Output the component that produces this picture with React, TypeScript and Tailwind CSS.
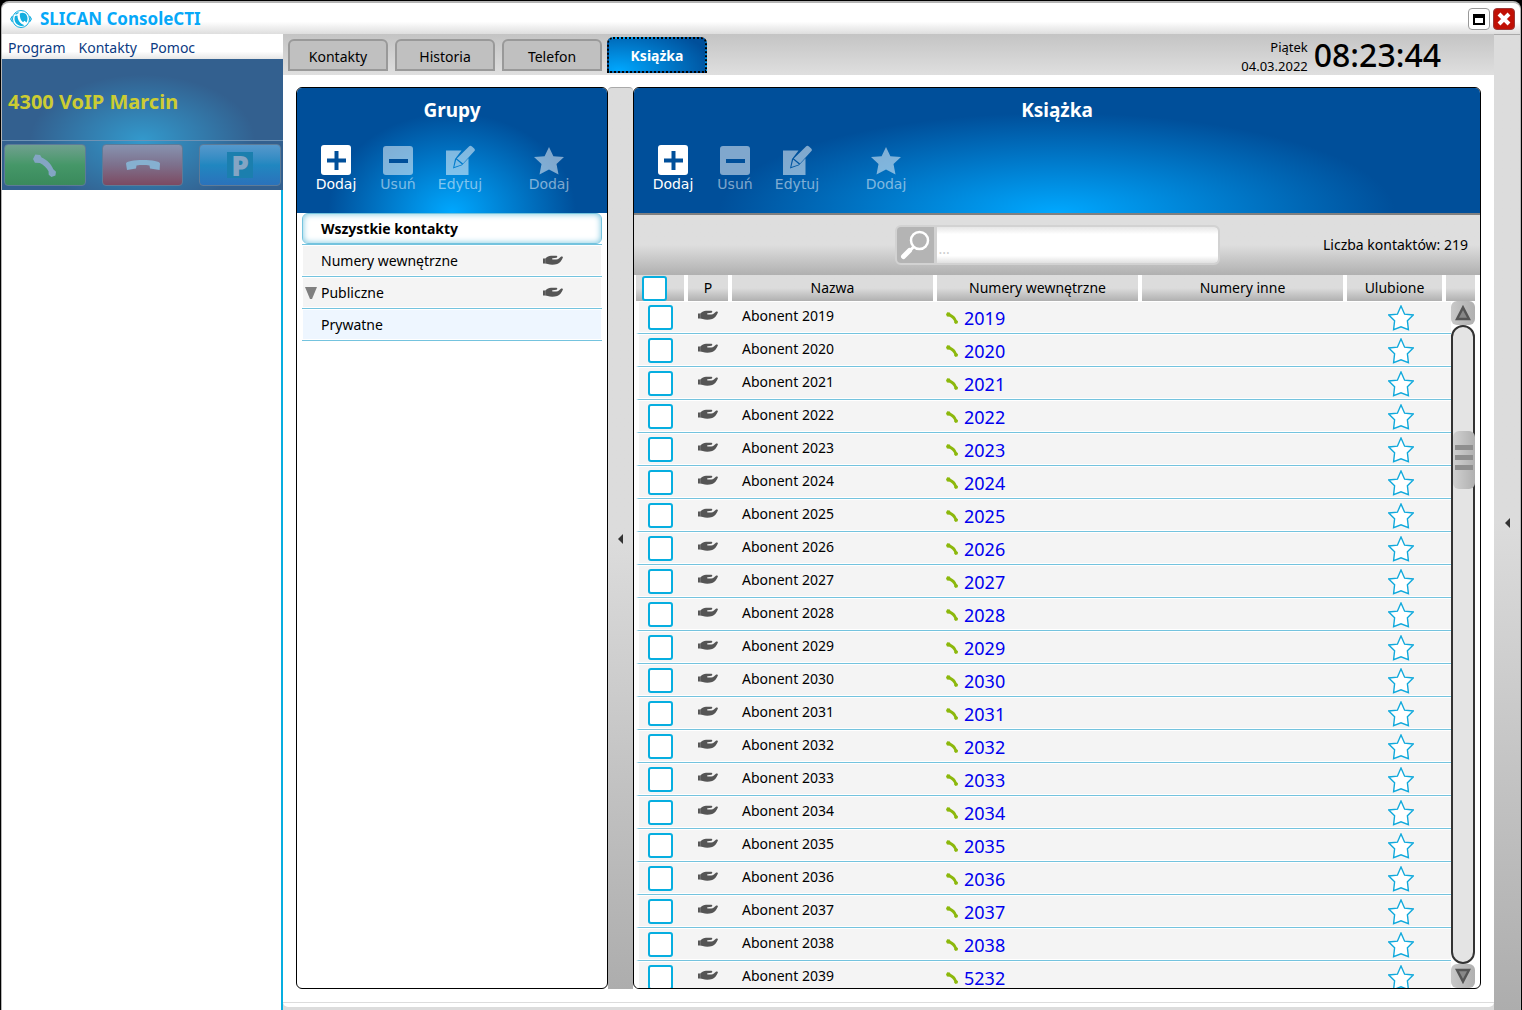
import { useState } from 'react'

type Group = {
    name: string
    shared: boolean
    expandable?: boolean
    own?: boolean
}

const groups: Group[] = [
    { name: 'Wszystkie kontakty', shared: false },
    { name: 'Numery wewnętrzne', shared: true },
    { name: 'Publiczne', shared: true, expandable: true },
    { name: 'Prywatne', shared: false, own: true },
]

const contacts = Array.from({ length: 21 }, (_, i) => {
    const number = String(2019 + i)
    return { name: `Abonent ${number}`, number: number === '2039' ? '5232' : number }
})

const tabs = ['Kontakty', 'Historia', 'Telefon', 'Książka']

function LogoIcon() {
    return (
        <svg className="w-[22px] h-5" viewBox="0 0 22 20" fill="none" aria-hidden="true">
            <path d="M2.500 7 .7 10l1.800 3M19.500 7l1.800 3-1.800 3" stroke="#12aee0" strokeWidth="1.200" />
            <circle cx="11" cy="10" r="8.500" fill="#fff" stroke="#12aee0" strokeWidth="1" />
            <path d="M5 7c-1.500 4 .5 8.500 5 9.700 2 .5 3.500.2 4.500-.5C10 15 7.500 11 7.500 6.500Z" fill="#12aee0" />
            <path d="M9.800 4.500c-.3 4 1 7 3.200 8.800l1.500-1.500 2 1.700c1.800-3 1.200-7-1.300-9-1.500-1-3.500-1.200-5.400 0Z" fill="#12aee0" />
            <path d="M5.500 5.200 8.500 3.500" stroke="#12aee0" strokeWidth="1.200" />
        </svg>
    )
}

function HandIcon() {
    return (
        <svg className="w-5 h-[11px] block" viewBox="0 0 20 11" fill="#555" aria-hidden="true">
            <path d="M0 3.400h2.500C4 1.800 6 .8 8 .8h5.300c1.300.1 1.300 1.700.2 1.900l-3.800.5c-.9.2-.8 1.100 0 1.200l3.500.2c2.200 0 3.300-2 5-3 .9-.5 2 .2 1.600 1.200C19 5 16.800 8.200 14.200 9c-3 .9-7 .9-9.500 0L2.500 8.400H0Z" />
            <path d="M2.300 3.500v4.800" stroke="#999" strokeWidth="0.500" />
        </svg>
    )
}

function HandsetIcon({ className }: { className: string }) {
    return (
        <svg className={className} viewBox="0 0 12 12" fill="currentColor" aria-hidden="true">
            <path d="M0 2.600 1.200.2 3.700.5 4.500 1.800C7.500 3.200 9.600 5.200 10.600 8L12 9.300 11.700 11.200 9.600 12 8.200 10.800 8.100 9C7.200 7.300 5.400 5.500 3.600 4.700L1 4.600Z" />
        </svg>
    )
}

function HangupIcon() {
    return (
        <svg className="w-[34px] h-[12px]" viewBox="0 0 34 12" fill="#86b0d0" aria-hidden="true">
            <path d="M0 4.500C0 2.500 8 1 17 1S34 2.500 34 4.500l-.4 6.500L24 9.500l-.5-3c-4-.6-9-.6-13 0L10 9.500 1 11Z" />
        </svg>
    )
}

function PlusIcon() {
    return (
        <svg className="size-[30px]" viewBox="0 0 30 30" aria-hidden="true">
            <rect width="30" height="30" rx="3" fill="#fff" />
            <path d="M15.500 6v19M6 15.500h19" stroke="#004f9a" strokeWidth="4" />
        </svg>
    )
}

function MinusIcon() {
    return (
        <svg className="size-[30px]" viewBox="0 0 30 30" aria-hidden="true">
            <rect y="1" width="30" height="29" rx="3" fill="#fff" fillOpacity="0.5" />
            <path d="M6 16h19" stroke="#004f9a" strokeWidth="4" />
        </svg>
    )
}

function EditIcon() {
    return (
        <svg className="size-[30px]" viewBox="0 0 30 30" aria-hidden="true">
            <g fill="#fff" fillOpacity="0.5">
                <path d="M1 5.500h15.500L10 14 8 23.500l9-3.200 6.500-7V30H1Z" />
                <path d="M24 1.500c1-1 2-.7 3 0l2.200 2c.9 1 .9 1.800 0 2.800L18 18.500 11.800 13.500Z" />
                <path d="m11.200 14.500 5.800 5L9.300 22Z" />
            </g>
        </svg>
    )
}

function SolidStarIcon() {
    return (
        <svg className="size-[30px]" viewBox="0 0 30 30" fill="#fff" fillOpacity="0.5" aria-hidden="true">
            <path d="m15 2 4.400 9.200 10.600.9-7.500 6.900 2 10.600L15 24.600l-9.500 5 2-10.600L0 12.100l10.600-.9Z" />
        </svg>
    )
}

function StarIcon() {
    return (
        <svg className="size-[26px] block" viewBox="0 0 26 26" fill="#fff" stroke="#10a9dc" strokeWidth="1.400" aria-hidden="true">
            <path d="m13 1 3.600 8.200 8.600.8-5.800 5.800 1 8.800L13 21.800l-7.400 2.800 1-8.800L.8 10l8.600-.8Z" />
        </svg>
    )
}

function SearchIcon() {
    return (
        <svg className="size-[30px]" viewBox="0 0 30 30" fill="none" stroke="#fff" aria-hidden="true">
            <circle cx="19.500" cy="10.500" r="8.500" strokeWidth="2.500" />
            <path d="m13.500 17-3 3" strokeWidth="3" />
            <path d="m9.500 20.500-6 6" strokeWidth="5" strokeLinecap="round" />
        </svg>
    )
}

function Toolbar({ title }: { title: string }) {
    const actions = [
        { label: 'Dodaj', icon: <PlusIcon />, enabled: true, style: 'text-white' },
        { label: 'Usuń', icon: <MinusIcon />, enabled: false, style: 'text-white/50' },
        { label: 'Edytuj', icon: <EditIcon />, enabled: false, style: 'text-white/50' },
        { label: 'Dodaj', icon: <SolidStarIcon />, enabled: false, style: 'text-white/50 ml-[27px]' },
    ]
    return (
        <header className="h-[125px] shrink-0 pt-2 bg-[radial-gradient(40%_80%_at_50%_100%,#00a8ff,#004f9a)]">
            <h2 className="text-center text-[19px] leading-7 font-bold text-white">{title}</h2>
            <div className="flex pl-2 mt-[21px]">
                {actions.map((action, i) => (
                    <button
                        key={i}
                        disabled={!action.enabled}
                        className={`w-[62px] flex flex-col items-center font-['DejaVu_Sans',sans-serif] text-sm leading-[18px] ${action.style}`}
                    >
                        {action.icon}
                        {action.label}
                    </button>
                ))}
            </div>
        </header>
    )
}

function ScrollBar() {
    return (
        <div className="absolute right-0 top-[26px] bottom-0 w-6 bg-white flex flex-col">
            <button aria-label="W górę" className="h-6 rounded-md bg-linear-to-r from-[#c8c8c8] to-[#b0b0b0] flex justify-center items-center">
                <svg className="size-4" viewBox="0 0 16 16" aria-hidden="true">
                    <path d="M8 2.500 14 14H2Z" fill="#888" stroke="#555" strokeWidth="2.500" />
                </svg>
            </button>
            <div className="flex-1 rounded-full border-2 border-[#333] bg-[#e4e4e4] relative">
                <div className="absolute -right-0.5 top-[16.3%] w-[22px] h-[58px] rounded-md bg-linear-to-r from-[#d0d0d0] to-[#b0b0b0] flex flex-col justify-center gap-[5px] px-0.5 pb-1">
                    <span className="h-[5px] bg-[#8e8e8e]" />
                    <span className="h-[5px] bg-[#8e8e8e]" />
                    <span className="h-[5px] bg-[#8e8e8e]" />
                </div>
            </div>
            <button aria-label="W dół" className="h-6 rounded-md bg-linear-to-r from-[#c8c8c8] to-[#b0b0b0] flex justify-center items-center">
                <svg className="size-4" viewBox="0 0 16 16" aria-hidden="true">
                    <path d="M8 13.500 14 2H2Z" fill="#888" stroke="#555" strokeWidth="2.500" />
                </svg>
            </button>
        </div>
    )
}

function CollapseArrow() {
    return (
        <svg className="w-[5px] h-[10px]" viewBox="0 0 5 10" fill="#333" aria-hidden="true">
            <path d="M5 0v10L0 5Z" />
        </svg>
    )
}

function ContactTable() {
    const head = 'font-normal p-0 h-[26px] border-r-4 border-white bg-linear-to-b from-[#dcdcdc] from-50% to-[#b0b0b0] bg-clip-padding'
    const cell = 'p-0 h-[33px] border-t border-t-white border-b border-b-[#74c3de] bg-[#f4f4f4] shadow-[inset_0_-1px_0_#fff]'
    const box = 'appearance-none block size-[25px] rounded-[3px] border-2 border-[#06aee0] bg-white checked:bg-[#06aee0]'
    return (
        <div className="flex-1 min-h-0 relative overflow-hidden ml-0.5 mr-[5px]">
            <table className="w-full table-fixed border-separate border-spacing-0 text-sm">
                <colgroup>
                    <col className="w-[52px]" />
                    <col className="w-11" />
                    <col />
                    <col />
                    <col />
                    <col className="w-[99px]" />
                    <col className="w-[29px]" />
                </colgroup>
                <thead>
                    <tr>
                        <th className={head}>
                            <input type="checkbox" aria-label="Zaznacz wszystkie" className={`${box} ml-1.5`} />
                        </th>
                        <th className={head}>P</th>
                        <th className={head}>Nazwa</th>
                        <th className={head}>Numery wewnętrzne</th>
                        <th className={head}>Numery inne</th>
                        <th className={head}>Ulubione</th>
                        <th className="p-0 bg-linear-to-b from-[#dcdcdc] from-50% to-[#b0b0b0]" />
                    </tr>
                </thead>
                <tbody>
                    {contacts.map((contact) => (
                        <tr key={contact.name}>
                            <td className={`${cell} border-l-3 border-l-white pl-[9px]`}>
                                <input type="checkbox" aria-label={contact.name} className={box} />
                            </td>
                            <td className={`${cell} pl-2.5 pb-1`}>
                                <HandIcon />
                            </td>
                            <td className={`${cell} pl-2.5 pb-1`}>{contact.name}</td>
                            <td className={`${cell} pl-[9px]`}>
                                <a href={`tel:${contact.number}`} className="flex items-center gap-1.5 text-lg leading-6 text-[#0000ee]">
                                    <HandsetIcon className="size-3 text-[#8cb80c]" />
                                    {contact.number}
                                </a>
                            </td>
                            <td className={cell} />
                            <td className={`${cell} pl-[41px]`}>
                                <button aria-label="Ulubione" className="block">
                                    <StarIcon />
                                </button>
                            </td>
                            <td className={cell} />
                        </tr>
                    ))}
                </tbody>
            </table>
            <ScrollBar />
        </div>
    )
}

function Sidebar() {
    const key = 'h-[42px] flex-1 rounded-[4px] border border-[#5d7b98] flex items-center justify-center'
    return (
        <aside className="w-[281px] shrink-0 flex flex-col bg-white">
            <nav className="h-[25px] flex items-center gap-[13px] pl-1.5 pt-0.5 text-sm text-[#0b3a82] bg-linear-to-b from-white from-70% to-[#e6e6e6]">
                <button>Program</button>
                <button>Kontakty</button>
                <button>Pomoc</button>
            </nav>
            <section className="h-[131px] shrink-0 flex flex-col bg-[radial-gradient(40%_50%_at_50%_62%,#3399cc,#33608f)]">
                <h1 className="h-[82px] pl-1.5 pt-1 flex items-center text-xl font-bold text-[#cccc33] border-b border-[#6f92b4]">
                    4300 VoIP Marcin
                </h1>
                <div className="flex gap-4 px-0.5 pt-[3px]">
                    <button aria-label="Zadzwoń" className={`${key} bg-linear-to-b from-[#6fa08f] via-[#459768] to-[#3a8a5c]`}>
                        <HandsetIcon className="size-[23px] text-[#84a5c4]" />
                    </button>
                    <button aria-label="Rozłącz" className={`${key} bg-linear-to-b from-[#8693b0] via-[#7d708c] to-[#7c4a62]`}>
                        <HangupIcon />
                    </button>
                    <button aria-label="Parkuj" className={`${key} bg-linear-to-b from-[#5598cc] via-[#2087c0] to-[#2a72bb]`}>
                        <span className="w-[26px] h-[26px] bg-[#1b7fae] text-[#84a5c4] text-[28px] leading-[26px] font-black">P</span>
                    </button>
                </div>
            </section>
            <div className="flex-1 border-r-2 border-[#06aee0]" />
        </aside>
    )
}

export default function App() {
    const [activeTab, setActiveTab] = useState('Książka')
    const [activeGroup, setActiveGroup] = useState('Wszystkie kontakty')

    return (
        <div className="h-screen bg-black pt-px pl-px pr-px font-['Noto_Sans','Open_Sans',sans-serif] text-black overflow-hidden">
            <div className="h-full flex flex-col rounded-t-lg border-t-2 border-x border-[#b5b5b5] bg-[#dcdcdc] overflow-hidden">
                <header className="h-[31px] shrink-0 flex items-center gap-2 pl-2 pr-[5px] pt-px bg-linear-to-b from-white from-60% to-[#dedede]">
                    <LogoIcon />
                    <span className="flex-1 text-[17px] font-bold text-[#06a8f8]">SLICAN ConsoleCTI</span>
                    <div className="flex gap-[3px]">
                        <button aria-label="Maksymalizuj" className="size-[22px] rounded border border-[#999] bg-white flex items-center justify-center">
                            <span className="w-3 h-[11px] border-2 border-t-4 border-black" />
                        </button>
                        <button aria-label="Zamknij" className="size-[22px] rounded border border-[#9a3a3a] bg-[#c01005] flex items-center justify-center">
                            <svg className="size-[14px]" viewBox="0 0 14 14" stroke="#fff" strokeWidth="4" aria-hidden="true">
                                <path d="m2 2 10 10M12 2 2 12" />
                            </svg>
                        </button>
                    </div>
                </header>

                <div className="flex-1 min-h-0 flex">
                    <Sidebar />
                    <main className="flex-1 min-w-0 flex flex-col">
                        <div className="h-[41px] shrink-0 flex items-center justify-between bg-linear-to-b from-[#c4c4c4] to-[#dfdfdf] pl-[5px] pr-[53px]">
                            <div className="flex items-center gap-[7px]" role="tablist">
                                {tabs.map((tab) => (
                                    <button
                                        key={tab}
                                        role="tab"
                                        aria-selected={tab === activeTab}
                                        onClick={() => setActiveTab(tab)}
                                        className={
                                            tab === activeTab
                                                ? '-ml-0.5 w-[100px] h-9 pt-0.5 rounded-t-md border-2 border-dotted border-black text-sm font-bold text-white bg-[radial-gradient(100%_150%_at_10%_100%,#00a8ff,#004f9a)]'
                                                : 'w-[100px] h-8 pt-1 rounded-t-md border-2 border-[#999] bg-[#c0c0c0] text-sm'
                                        }
                                    >
                                        {tab}
                                    </button>
                                ))}
                            </div>
                            <div className="flex items-center gap-1.5">
                                <div className="text-right text-[13px] leading-[19px] pt-1">
                                    <p>Piątek</p>
                                    <p>04.03.2022</p>
                                </div>
                                <time className="text-[32px] leading-10 font-medium">08:23:44</time>
                            </div>
                        </div>

                        <div className="flex-1 min-h-0 flex bg-white pt-3 px-[13px] pb-[13px]">
                            <section className="w-[312px] shrink-0 flex flex-col rounded-md border border-black bg-white overflow-hidden">
                                <Toolbar title="Grupy" />
                                <ul className="mx-[5px] text-sm">
                                    {groups.map((group) => (
                                        <li key={group.name} className="h-8 border-b border-[#74c3de]">
                                            <button
                                                onClick={() => setActiveGroup(group.name)}
                                                className={`relative w-full h-[31px] pl-[18px] pr-[38px] border flex items-center justify-between ${
                                                    group.name === activeGroup
                                                        ? 'rounded-md border-[#74c3de] bg-white font-bold shadow-[inset_0_0_6px_#74c3de]'
                                                        : group.own
                                                          ? 'border-white bg-[#eef6ff]'
                                                          : 'border-white bg-[#f4f4f4]'
                                                }`}
                                            >
                                                {group.expandable && (
                                                    <svg className="absolute left-0.5 w-3 h-3" viewBox="0 0 12 12" fill="#808080" aria-hidden="true">
                                                        <path d="M0 0h12L7 12H5Z" />
                                                    </svg>
                                                )}
                                                {group.name}
                                                {group.shared && <HandIcon />}
                                            </button>
                                        </li>
                                    ))}
                                </ul>
                            </section>

                            <button
                                aria-label="Zwiń grupy"
                                className="w-[25px] shrink-0 rounded-t border-t border-[#aaa] bg-linear-to-b from-[#dcdcdc] from-50% to-[#adadad] flex items-center justify-center"
                            >
                                <CollapseArrow />
                            </button>

                            <section className="flex-1 min-w-0 flex flex-col rounded-md border border-black bg-white overflow-hidden">
                                <Toolbar title="Książka" />
                                <div className="h-[62px] shrink-0 grid grid-cols-[1fr_325px_1fr] items-center border-t-2 border-[#808080] bg-linear-to-b from-[#dedede] from-50% to-[#b0b0b0] text-sm">
                                    <label className="col-start-2 h-10 flex rounded-md border-2 border-[#d2d2d2] bg-[#b4b4b4] overflow-hidden">
                                        <span className="w-[37px] flex items-center justify-center">
                                            <SearchIcon />
                                        </span>
                                        <input
                                            type="text"
                                            aria-label="Szukaj"
                                            placeholder="..."
                                            className="flex-1 min-w-0 border-l-3 border-[#d2d2d2] pl-0.5 pt-2 outline-none placeholder:text-[#ccc] bg-[linear-gradient(to_bottom,#e6e6e6,#fff_20%,#fff_80%,#e0e0e0)]"
                                        />
                                    </label>
                                    <p className="text-right pr-3">Liczba kontaktów: 219</p>
                                </div>
                                <ContactTable />
                            </section>
                        </div>
                        <div className="h-2 shrink-0 flex flex-col bg-[#dcdcdc]">
                            <div className="h-[5px] rounded-b-md border-t border-[#dcdcdc] bg-white" />
                        </div>
                    </main>
                    <button
                        aria-label="Zwiń panel"
                        className="w-[26px] shrink-0 border-t border-[#aaa] bg-linear-to-b from-[#dcdcdc] from-50% to-[#adadad] flex items-center justify-center"
                    >
                        <CollapseArrow />
                    </button>
                </div>
            </div>
        </div>
    )
}
